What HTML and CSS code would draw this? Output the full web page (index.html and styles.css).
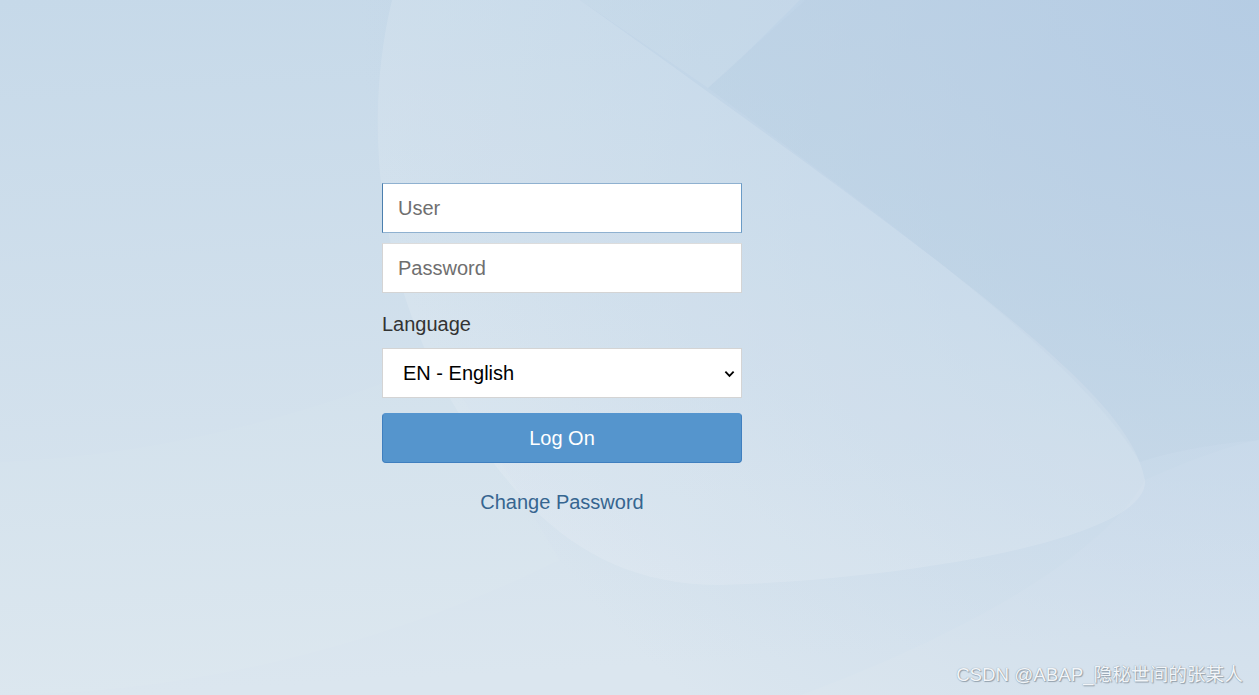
FILE: index.html
```html
<!DOCTYPE html>
<html lang="en">
<head>
<meta charset="utf-8">
<title>Logon</title>
<link rel="stylesheet" href="styles.css">
</head>
<body>
<svg class="bg" viewBox="0 0 1259 695" preserveAspectRatio="none" aria-hidden="true">
  <defs>
    <linearGradient id="g" x1="0" y1="0" x2="0.1" y2="1">
      <stop offset="0" stop-color="#c6d9e9"/>
      <stop offset="1" stop-color="#dbe6ef"/>
    </linearGradient>
    <radialGradient id="g2" cx="1259" cy="0" r="900" gradientUnits="userSpaceOnUse">
      <stop offset="0" stop-color="#b4cce4" stop-opacity="0.85"/>
      <stop offset="0.6" stop-color="#b4cce4" stop-opacity="0.35"/>
      <stop offset="1" stop-color="#b4cce4" stop-opacity="0"/>
    </radialGradient>
  </defs>
  <rect width="1259" height="695" fill="url(#g)"/>
  <rect width="1259" height="695" fill="url(#g2)"/>
  <path d="M0 462 C 150 455, 300 420, 440 360 L 560 560 C 400 640, 200 695, 0 695 Z" fill="#ffffff" opacity="0.04"/>
  <path d="M392 0 C 360 130, 380 300, 470 430 C 530 520, 600 585, 720 585 C 900 580, 1150 540, 1145 480 C 1130 400, 1000 300, 580 0 Z" fill="#ffffff" opacity="0.13"/>
  <path d="M580 0 L 800 0 C 760 40, 730 70, 708 88 Z" fill="#ffffff" opacity="0.08"/>
  <path d="M708 88 C 760 40, 790 15, 805 0 L 1259 0 L 1259 440 C 1200 445, 1160 455, 1140 462 C 1080 360, 900 230, 708 88 Z" fill="#a9c3dd" opacity="0.08"/>
  <path d="M1145 480 C 1190 460, 1230 445, 1259 440 L 1259 695 L 800 695 C 950 640, 1100 560, 1145 480 Z" fill="#ffffff" opacity="0.05"/>
</svg>
<main class="page">
  <form class="logon">
    <input class="field field-focus" type="text" placeholder="User">
    <input class="field" type="password" placeholder="Password">
    <label class="lang-label">Language</label>
    <div class="select-wrap">
      <span class="select-text">EN - English</span>
      <svg class="chev" viewBox="0 0 12 8" aria-hidden="true"><path d="M1.5 1.5 L6 6 L10.5 1.5" fill="none" stroke="#000" stroke-width="2"/></svg>
    </div>
    <button class="btn" type="button">Log On</button>
    <a class="change" href="#">Change Password</a>
  </form>
</main>
<div class="watermark">CSDN @ABAP_隐秘世间的张某人</div>
</body>
</html>
```
FILE: styles.css
```css
html, body {
  margin: 0;
  padding: 0;
  width: 1259px;
  height: 695px;
  overflow: hidden;
}
body {
  position: relative;
  font-family: "Liberation Sans", Arial, sans-serif;
  background: #cddcea;
}
.bg {
  position: absolute;
  left: 0;
  top: 0;
  width: 1259px;
  height: 695px;
  z-index: 0;
}
.page {
  position: relative;
  z-index: 1;
  display: flex;
  justify-content: flex-start;
  padding-top: 183px;
  padding-left: 382px;
}
.logon {
  width: 360px;
  display: flex;
  flex-direction: column;
}
.field {
  box-sizing: border-box;
  width: 360px;
  height: 50px;
  margin: 0 0 10px 0;
  padding: 0 15px;
  border: 1px solid #d4d4d4;
  border-top-color: #dcdcdc;
  background: #fff;
  font-family: "Liberation Sans", Arial, sans-serif;
  font-size: 20px;
  color: #333;
  outline: none;
}
.field::placeholder {
  color: #6f6f6f;
}
.field-focus {
  border: 1px solid #6a9bc6;
  border-top-color: #8fb1d0;
  border-bottom-color: #8fb1d0;
  border-left-color: #4b7fae;
}
.lang-label {
  margin-top: 9px;
  height: 24px;
  line-height: 24px;
  font-size: 20px;
  color: #333;
}
.select-wrap {
  box-sizing: border-box;
  margin-top: 12px;
  height: 50px;
  border: 1px solid #d4d4d4;
  background: #fff;
  display: flex;
  align-items: center;
  justify-content: space-between;
  padding: 0 6px 0 20px;
}
.select-text {
  font-size: 20px;
  color: #000;
}
.chev {
  width: 11px;
  height: 8px;
  margin-top: 1px;
}
.btn {
  box-sizing: border-box;
  margin-top: 15px;
  height: 50px;
  width: 360px;
  border: 1px solid #3f7fbf;
  border-top-color: #5595cf;
  border-radius: 4px;
  background: #5595cd;
  color: #fff;
  font-family: "Liberation Sans", Arial, sans-serif;
  font-size: 20px;
  padding: 0;
}
.change {
  margin-top: 27px;
  align-self: center;
  font-size: 20px;
  color: #366590;
  text-decoration: none;
  line-height: 24px;
}
.watermark {
  position: absolute;
  right: 16px;
  bottom: 9px;
  z-index: 2;
  font-family: "Liberation Sans", "Noto Sans CJK SC", sans-serif;
  font-size: 18.7px;
  color: #f2f5f8;
  text-shadow: 0 0 1px #7f8d9b, 1px 1px 1px #95a2ae;
}
```
